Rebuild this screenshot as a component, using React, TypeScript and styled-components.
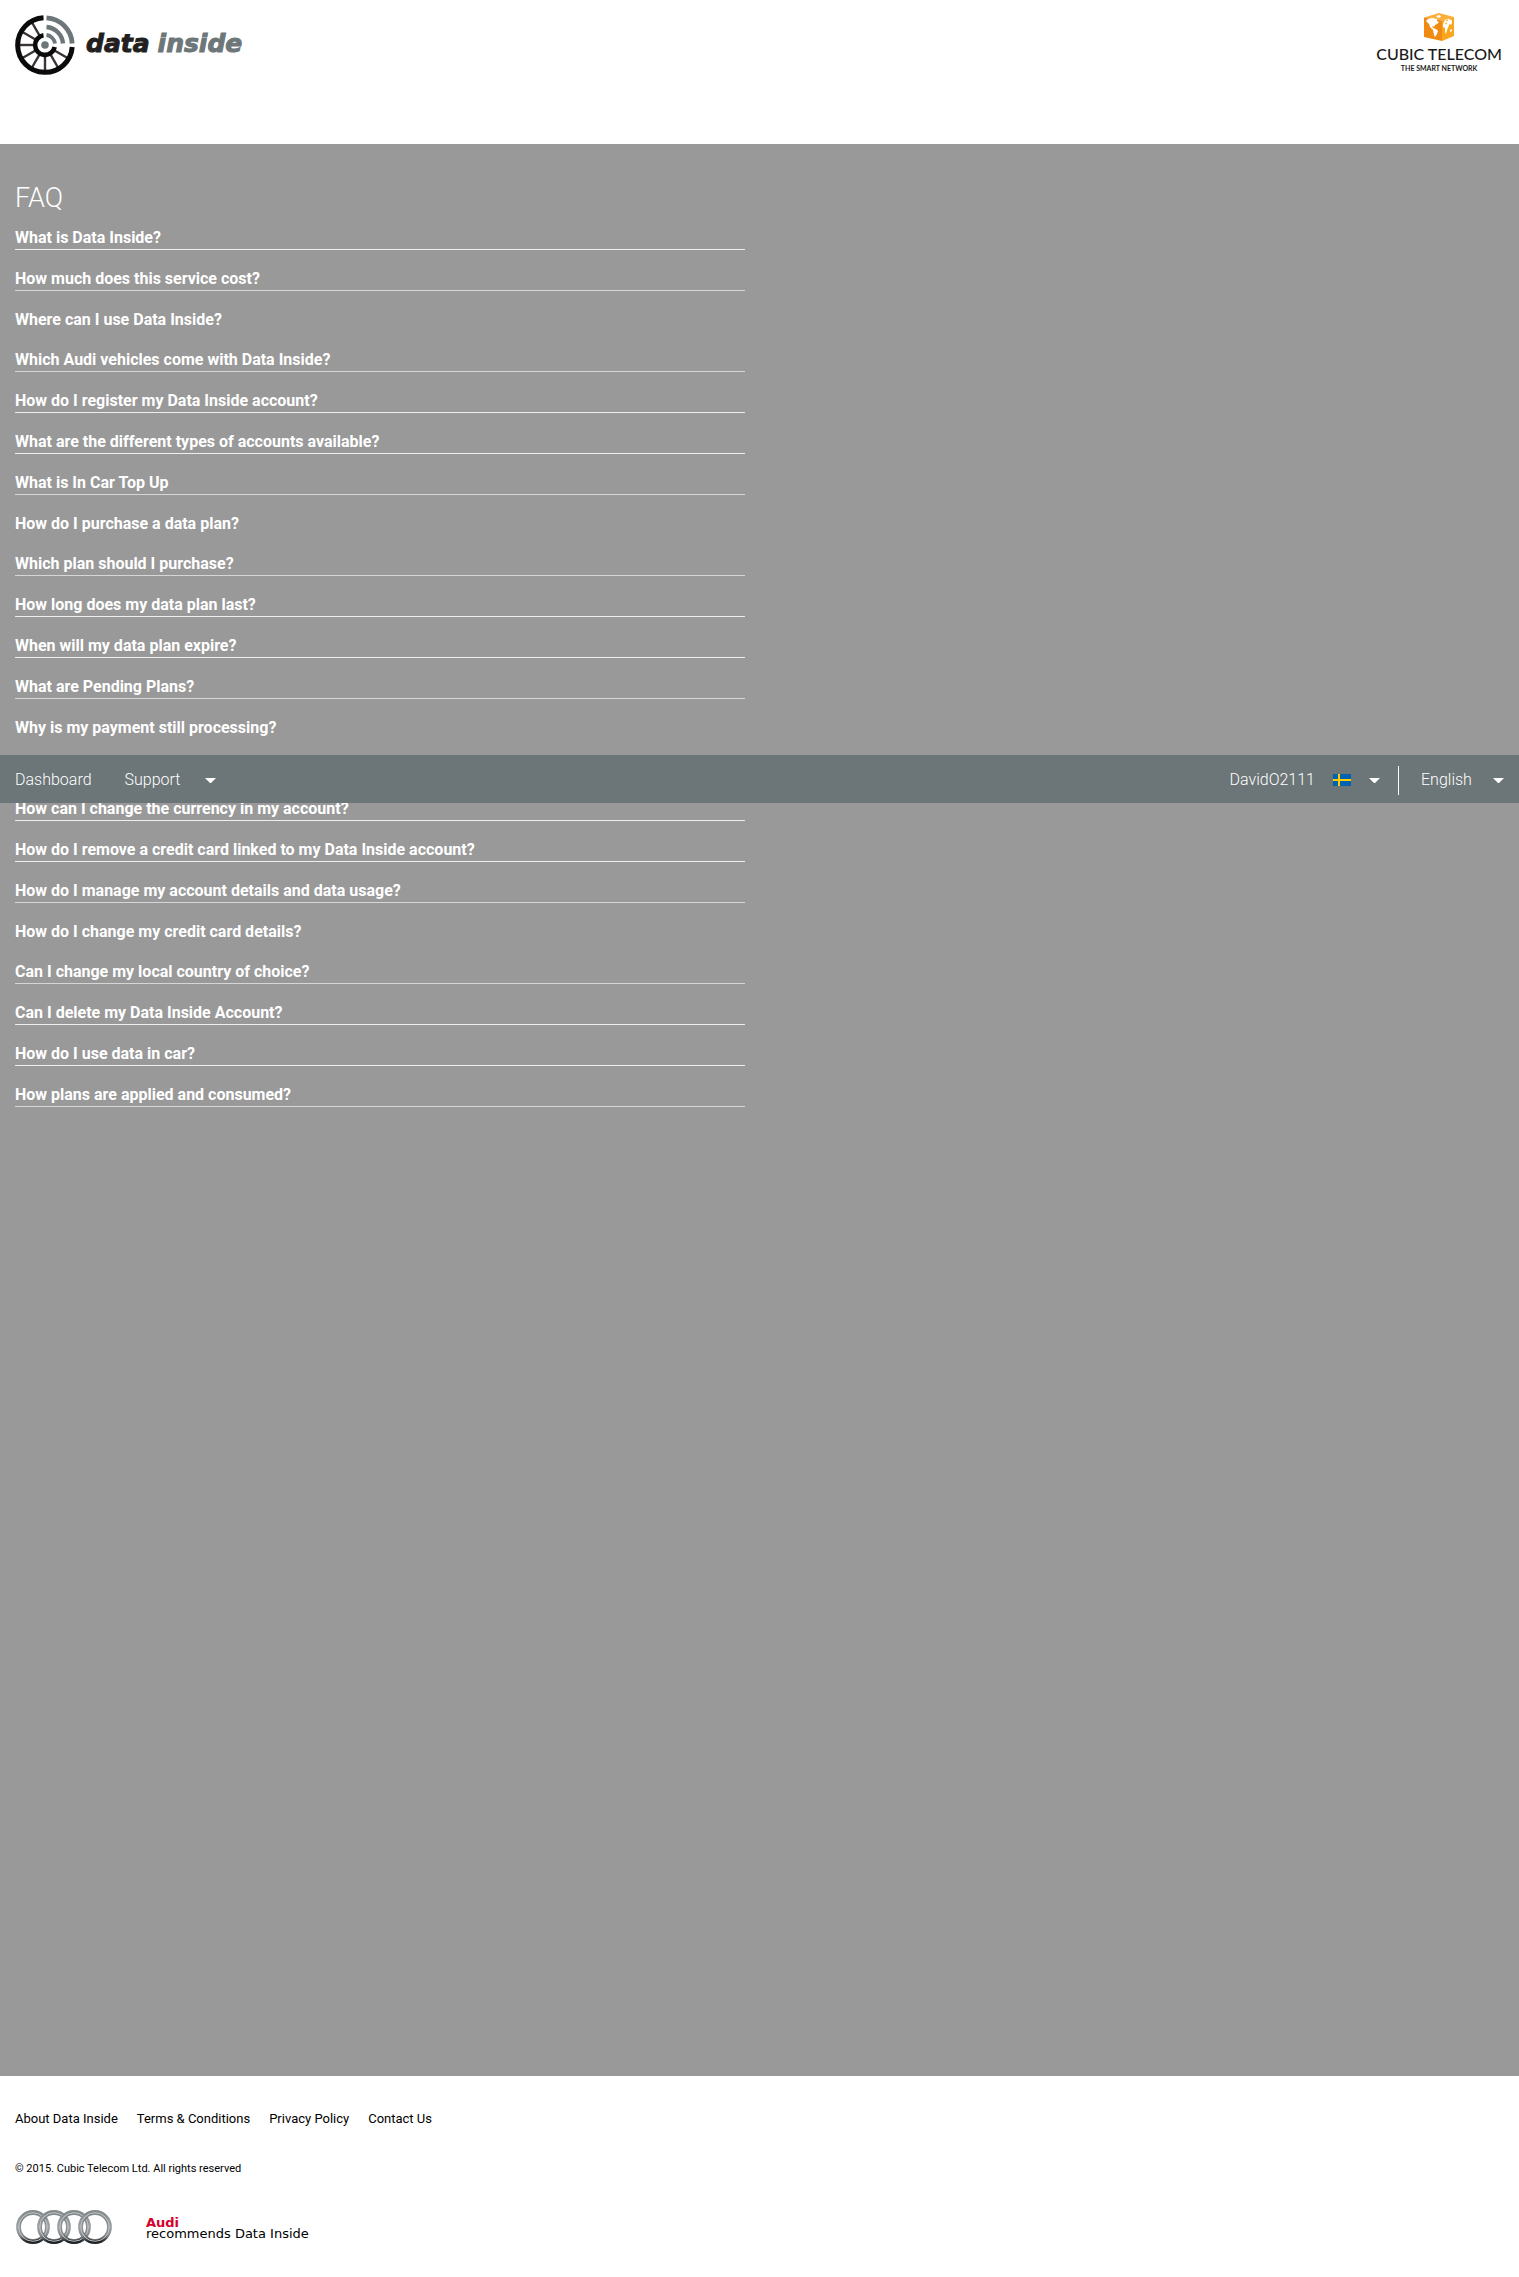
import React from "react";
import styled, { createGlobalStyle } from "styled-components";

const GlobalStyle = createGlobalStyle`
  *, *::before, *::after { box-sizing: border-box; }
  body {
    margin: 0;
    background: #fff;
    color: #000;
    font-family: Roboto, "Liberation Sans", sans-serif;
  }
`;

const Page = styled.div`
  display: flex;
  flex-direction: column;
  min-height: 100vh;
`;

const Header = styled.header`
  display: flex;
  justify-content: space-between;
  align-items: flex-start;
  height: 144px;
  padding: 12px 15px 0;
`;

const BrandLink = styled.a`
  display: flex;
  align-items: center;
  gap: 11px;
  color: #231f20;
  text-decoration: none;
`;

const Wordmark = styled.span`
  display: flex;
  gap: 8px;
  font-family: "DejaVu Sans", sans-serif;
  font-size: 25px;
  line-height: 28px;
  font-weight: 700;
  font-style: italic;
  -webkit-text-stroke: 1px currentColor;
`;

const WordmarkAccent = styled.span`
  color: #6d7678;
`;

const PartnerLink = styled.a`
  display: flex;
  flex-direction: column;
  align-items: center;
  padding-right: 2px;
  color: #1a1a1a;
  font-family: Lato, "Open Sans", sans-serif;
  text-decoration: none;
`;

const PartnerName = styled.span`
  margin-top: 2px;
  font-size: 16px;
  line-height: 20px;
  font-weight: 500;
`;

const PartnerTagline = styled.span`
  font-size: 7px;
  line-height: 8px;
  font-weight: 700;
`;

const Main = styled.main`
  position: relative;
  flex: 1;
  padding: 44px 15px 60px;
  background: #999;
  color: #fff;
`;

const Title = styled.h1`
  margin: 0;
  font-size: 27px;
  line-height: 21px;
  font-weight: 300;
`;

const FaqList = styled.ul`
  width: 50%;
  margin: 0;
  padding: 0 15px 0 0;
  list-style: none;
`;

const FaqItem = styled.li`
  border-bottom: 1px solid #eee;

  &:nth-child(5n + 2),
  &:nth-child(5n + 4) {
    border-color: #d6d6d6;
  }

  &:nth-child(5n + 3) {
    border-bottom: 0;
  }
`;

const Question = styled.button`
  display: block;
  width: 100%;
  height: 40px;
  padding: 19px 0 1px;
  border: 0;
  background: none;
  color: inherit;
  font-family: inherit;
  font-size: 16px;
  line-height: 20px;
  font-weight: 700;
  text-align: left;
  cursor: pointer;
`;

/* Floating bar: stays above the list of questions. */
const NavBar = styled.nav`
  position: absolute;
  top: 611px;
  left: 0;
  right: 0;
  display: flex;
  justify-content: space-between;
  align-items: center;
  height: 48px;
  padding: 2px 15px 0;
  background: #6c7577;
  font-size: 16px;
  line-height: 20px;
  font-weight: 300;
`;

const NavGroup = styled.div`
  display: flex;
  align-items: center;
  gap: 33px;
`;

const NavLink = styled.a`
  color: #fff;
  text-decoration: none;
`;

const MenuButton = styled.button<{ $gap: number }>`
  display: flex;
  align-items: center;
  gap: ${(p) => p.$gap}px;
  padding: 0;
  border: 0;
  background: none;
  color: #fff;
  font: inherit;
  cursor: pointer;
`;

const AccountGroup = styled.div`
  display: flex;
  align-items: center;
`;

const LanguagePicker = styled.label`
  display: flex;
  align-items: center;
  gap: 21px;
  height: 29px;
  margin-left: 18px;
  padding-left: 22px;
  border-left: 1px solid #fff;
`;

const LanguageSelect = styled.select`
  appearance: none;
  padding: 0;
  border: 0;
  background: none;
  color: #fff;
  font: inherit;
`;

const Footer = styled.footer`
  padding: 33px 15px 32px;
`;

const FooterLinks = styled.nav`
  display: flex;
  gap: 19px;
  font-size: 13px;
  line-height: 20px;
`;

const FooterLink = styled.a`
  color: #000;
  text-decoration: none;
`;

const Copyright = styled.p`
  margin: 31px 0;
  font-size: 11px;
  line-height: 18px;
`;

const Endorsement = styled.div`
  display: flex;
  align-items: center;
  gap: 33px;
`;

const EndorsementText = styled.p`
  margin: 0;
  padding-top: 2px;
  font-family: "DejaVu Sans", sans-serif;
  font-size: 13px;
  line-height: 11px;
`;

const EndorsementName = styled.strong`
  display: block;
  color: #d4002d;
`;

const questions = [
  "What is Data Inside?",
  "How much does this service cost?",
  "Where can I use Data Inside?",
  "Which Audi vehicles come with Data Inside?",
  "How do I register my Data Inside account?",
  "What are the different types of accounts available?",
  "What is In Car Top Up",
  "How do I purchase a data plan?",
  "Which plan should I purchase?",
  "How long does my data plan last?",
  "When will my data plan expire?",
  "What are Pending Plans?",
  "Why is my payment still processing?",
  "",
  "How can I change the currency in my account?",
  "How do I remove a credit card linked to my Data Inside account?",
  "How do I manage my account details and data usage?",
  "How do I change my credit card details?",
  "Can I change my local country of choice?",
  "Can I delete my Data Inside Account?",
  "How do I use data in car?",
  "How plans are applied and consumed?",
];

const footerLinks = ["About Data Inside", "Terms & Conditions", "Privacy Policy", "Contact Us"];

const spokeAngles = [30, 60, 90, 120, 150, 180, 210, 240];

function WheelLogo() {
  return (
    <svg width="60" height="64" viewBox="0 0 60 64" aria-hidden="true">
      <g fill="none" transform="translate(30 33)">
        {spokeAngles.map((a) => (
          <path key={a} d="M10 0H26" stroke="#3b3335" strokeWidth="2.4" transform={`rotate(${a})`} />
        ))}
        <path d="M-1.5-27.2A27.3 27.3 0 1 0 27.2 2" stroke="#0b0b0b" strokeWidth="5" />
        <path d="M-1.5-9.8A9.900 9.900 0 1 0 9.700 2" stroke="#0b0b0b" strokeWidth="4.600" />
        <circle r="3.8" fill="#6d7678" />
        <path d="M1.500-10A10 10 0 0 1 10-1.5" stroke="#6d7678" strokeWidth="3.800" />
        <path d="M1.500-18A18 18 0 0 1 18-1.5" stroke="#6d7678" strokeWidth="4.400" />
        <path d="M1.500-27.2A27.2 27.2 0 0 1 27.2-1.5" stroke="#6d7678" strokeWidth="4.800" />
      </g>
    </svg>
  );
}

function CubeLogo() {
  return (
    <svg width="32" height="30" viewBox="0 0 32 30" aria-hidden="true">
      <path d="M1 5.500L16 1L31 5L19 8.500Z" fill="#fbb03b" />
      <path d="M1 5.500L19 8.500V29L1 25Z" fill="#f08a12" />
      <path d="M19 8.500L31 5V24L19 29Z" fill="#f9a61c" />
      <g fill="#fff">
        <path d="M3 9L5 7L9 6L14 7L14 9L16 10L14 12L12 13L11 15L9 14L10 16L13 17L15 19L14 22L12 25L11 23L10 18L7 15L6 12L4 10Z" />
        <path d="M13 4L17 3L18 5L15 6Z" />
        <path d="M21 10L22 8L25 7L29 8V11L28 13L27 12L26 13L25 16L24 18L23 22L22 20L22 16L20 15L20 12Z" />
        <path d="M27 18L29 17V19L27 20Z" />
      </g>
      <path d="M23 9L25 8M22 12L24 11" stroke="#f9a61c" />
    </svg>
  );
}

function Caret() {
  return (
    <svg width="11" height="5" viewBox="0 0 11 5" aria-hidden="true">
      <path d="M0 0H11L5.500 5.500Z" fill="#fff" />
    </svg>
  );
}

function SwedenFlag() {
  return (
    <svg width="18" height="12" viewBox="0 0 18 12" role="img" aria-label="Sweden">
      <path d="M0 0H18V12H0Z" fill="#0063b1" />
      <path d="M5 0H7V12H5ZM0 5H18V7H0Z" fill="#ffcc00" />
    </svg>
  );
}

function AudiRings() {
  return (
    <svg width="98" height="36" viewBox="0 0 98 36" role="img" aria-label="Audi">
      <defs>
        <linearGradient id="ring" x1="0" y1="0" x2="0" y2="1">
          <stop offset="0" stopColor="#858a8d" />
          <stop offset="0.5" stopColor="#9fa3a5" />
          <stop offset="0.8" stopColor="#85898c" />
          <stop offset="1" stopColor="#1e2124" />
        </linearGradient>
      </defs>
      {[18, 39, 59, 80].map((cx) => (
        <g key={cx} fill="none">
          <circle cx={cx} cy="18" r="14.700" stroke="url(#ring)" strokeWidth="4.400" />
          <circle cx={cx} cy="18" r="14.300" stroke="#c4c8c9" strokeWidth="0.900" />
          <circle cx={cx} cy="18" r="12.600" stroke="#4c5154" strokeWidth="0.500" />
        </g>
      ))}
    </svg>
  );
}

export default function App() {
  return (
    <>
      <GlobalStyle />
      <Page>
        <Header>
          <BrandLink href="#home">
            <WheelLogo />
            <Wordmark>
              <span>data</span>
              <WordmarkAccent>inside</WordmarkAccent>
            </Wordmark>
          </BrandLink>
          <PartnerLink href="#cubic">
            <CubeLogo />
            <PartnerName>CUBIC TELECOM</PartnerName>
            <PartnerTagline>THE SMART NETWORK</PartnerTagline>
          </PartnerLink>
        </Header>

        <Main>
          <Title>FAQ</Title>
          <FaqList>
            {questions.map((q, i) => (
              <FaqItem key={i}>{q ? <Question type="button">{q}</Question> : <Question as="div" />}</FaqItem>
            ))}
          </FaqList>

          <NavBar aria-label="Main">
            <NavGroup>
              <NavLink href="#dashboard">Dashboard</NavLink>
              <MenuButton type="button" $gap={25}>
                Support
                <Caret />
              </MenuButton>
            </NavGroup>
            <AccountGroup>
              <MenuButton type="button" $gap={18}>
                DavidO2111
                <SwedenFlag />
                <Caret />
              </MenuButton>
              <LanguagePicker>
                <LanguageSelect aria-label="Language" defaultValue="en">
                  <option value="en">English</option>
                </LanguageSelect>
                <Caret />
              </LanguagePicker>
            </AccountGroup>
          </NavBar>
        </Main>

        <Footer>
          <FooterLinks aria-label="Footer">
            {footerLinks.map((label) => (
              <FooterLink key={label} href="#info">
                {label}
              </FooterLink>
            ))}
          </FooterLinks>
          <Copyright>© 2015. Cubic Telecom Ltd. All rights reserved</Copyright>
          <Endorsement>
            <AudiRings />
            <EndorsementText>
              <EndorsementName>Audi</EndorsementName>
              recommends Data Inside
            </EndorsementText>
          </Endorsement>
        </Footer>
      </Page>
    </>
  );
}
